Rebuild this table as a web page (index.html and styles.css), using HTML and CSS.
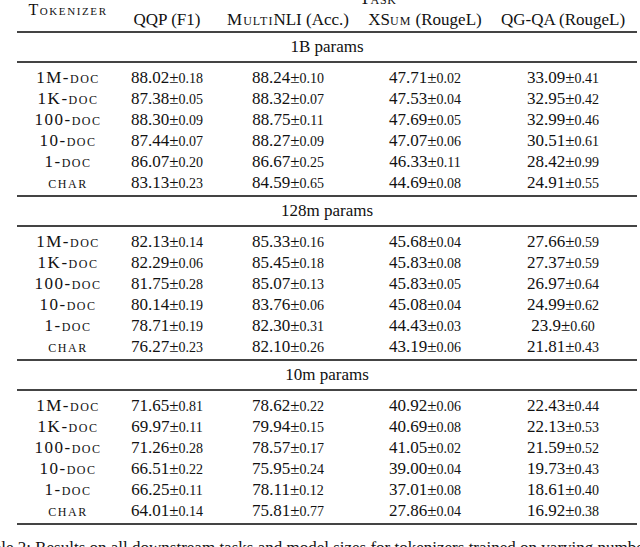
FILE: index.html
```html
<!DOCTYPE html>
<html>
<head>
<meta charset="utf-8">
<link rel="stylesheet" href="styles.css">
</head>
<body>
<table class="results">
  <colgroup>
    <col class="c-tok"><col class="c-qqp"><col class="c-nli"><col class="c-xsum"><col class="c-qg">
  </colgroup>
  <thead>
    <tr>
      <th rowspan="2" class="tok-h">Tokenizer</th>
      <th colspan="4" class="task-h">Task</th>
    </tr>
    <tr>
      <th class="sub">QQP (F1)</th>
      <th class="sub"><span class="sc">Multi</span>NLI (Acc.)</th>
      <th class="sub">XS<span class="sc">um</span> (RougeL)</th>
      <th class="sub">QG-QA (RougeL)</th>
    </tr>
  </thead>
  <tbody>
    <tr class="group"><td colspan="5">1B params</td></tr>
    <tr class="first"><td class="tok">1M-doc</td><td>88.02<span class="pm">±</span><span class="sd">0.18</span></td><td>88.24<span class="pm">±</span><span class="sd">0.10</span></td><td>47.71<span class="pm">±</span><span class="sd">0.02</span></td><td>33.09<span class="pm">±</span><span class="sd">0.41</span></td></tr>
    <tr><td class="tok">1K-doc</td><td>87.38<span class="pm">±</span><span class="sd">0.05</span></td><td>88.32<span class="pm">±</span><span class="sd">0.07</span></td><td>47.53<span class="pm">±</span><span class="sd">0.04</span></td><td>32.95<span class="pm">±</span><span class="sd">0.42</span></td></tr>
    <tr><td class="tok">100-doc</td><td>88.30<span class="pm">±</span><span class="sd">0.09</span></td><td>88.75<span class="pm">±</span><span class="sd">0.11</span></td><td>47.69<span class="pm">±</span><span class="sd">0.05</span></td><td>32.99<span class="pm">±</span><span class="sd">0.46</span></td></tr>
    <tr><td class="tok">10-doc</td><td>87.44<span class="pm">±</span><span class="sd">0.07</span></td><td>88.27<span class="pm">±</span><span class="sd">0.09</span></td><td>47.07<span class="pm">±</span><span class="sd">0.06</span></td><td>30.51<span class="pm">±</span><span class="sd">0.61</span></td></tr>
    <tr><td class="tok">1-doc</td><td>86.07<span class="pm">±</span><span class="sd">0.20</span></td><td>86.67<span class="pm">±</span><span class="sd">0.25</span></td><td>46.33<span class="pm">±</span><span class="sd">0.11</span></td><td>28.42<span class="pm">±</span><span class="sd">0.99</span></td></tr>
    <tr class="last"><td class="tok">char</td><td>83.13<span class="pm">±</span><span class="sd">0.23</span></td><td>84.59<span class="pm">±</span><span class="sd">0.65</span></td><td>44.69<span class="pm">±</span><span class="sd">0.08</span></td><td>24.91<span class="pm">±</span><span class="sd">0.55</span></td></tr>
  </tbody>
  <tbody>
    <tr class="group"><td colspan="5">128m params</td></tr>
    <tr class="first"><td class="tok">1M-doc</td><td>82.13<span class="pm">±</span><span class="sd">0.14</span></td><td>85.33<span class="pm">±</span><span class="sd">0.16</span></td><td>45.68<span class="pm">±</span><span class="sd">0.04</span></td><td>27.66<span class="pm">±</span><span class="sd">0.59</span></td></tr>
    <tr><td class="tok">1K-doc</td><td>82.29<span class="pm">±</span><span class="sd">0.06</span></td><td>85.45<span class="pm">±</span><span class="sd">0.18</span></td><td>45.83<span class="pm">±</span><span class="sd">0.08</span></td><td>27.37<span class="pm">±</span><span class="sd">0.59</span></td></tr>
    <tr><td class="tok">100-doc</td><td>81.75<span class="pm">±</span><span class="sd">0.28</span></td><td>85.07<span class="pm">±</span><span class="sd">0.13</span></td><td>45.83<span class="pm">±</span><span class="sd">0.05</span></td><td>26.97<span class="pm">±</span><span class="sd">0.64</span></td></tr>
    <tr><td class="tok">10-doc</td><td>80.14<span class="pm">±</span><span class="sd">0.19</span></td><td>83.76<span class="pm">±</span><span class="sd">0.06</span></td><td>45.08<span class="pm">±</span><span class="sd">0.04</span></td><td>24.99<span class="pm">±</span><span class="sd">0.62</span></td></tr>
    <tr><td class="tok">1-doc</td><td>78.71<span class="pm">±</span><span class="sd">0.19</span></td><td>82.30<span class="pm">±</span><span class="sd">0.31</span></td><td>44.43<span class="pm">±</span><span class="sd">0.03</span></td><td>23.9<span class="pm">±</span><span class="sd">0.60</span></td></tr>
    <tr class="last"><td class="tok">char</td><td>76.27<span class="pm">±</span><span class="sd">0.23</span></td><td>82.10<span class="pm">±</span><span class="sd">0.26</span></td><td>43.19<span class="pm">±</span><span class="sd">0.06</span></td><td>21.81<span class="pm">±</span><span class="sd">0.43</span></td></tr>
  </tbody>
  <tbody>
    <tr class="group"><td colspan="5">10m params</td></tr>
    <tr class="first"><td class="tok">1M-doc</td><td>71.65<span class="pm">±</span><span class="sd">0.81</span></td><td>78.62<span class="pm">±</span><span class="sd">0.22</span></td><td>40.92<span class="pm">±</span><span class="sd">0.06</span></td><td>22.43<span class="pm">±</span><span class="sd">0.44</span></td></tr>
    <tr><td class="tok">1K-doc</td><td>69.97<span class="pm">±</span><span class="sd">0.11</span></td><td>79.94<span class="pm">±</span><span class="sd">0.15</span></td><td>40.69<span class="pm">±</span><span class="sd">0.08</span></td><td>22.13<span class="pm">±</span><span class="sd">0.53</span></td></tr>
    <tr><td class="tok">100-doc</td><td>71.26<span class="pm">±</span><span class="sd">0.28</span></td><td>78.57<span class="pm">±</span><span class="sd">0.17</span></td><td>41.05<span class="pm">±</span><span class="sd">0.02</span></td><td>21.59<span class="pm">±</span><span class="sd">0.52</span></td></tr>
    <tr><td class="tok">10-doc</td><td>66.51<span class="pm">±</span><span class="sd">0.22</span></td><td>75.95<span class="pm">±</span><span class="sd">0.24</span></td><td>39.00<span class="pm">±</span><span class="sd">0.04</span></td><td>19.73<span class="pm">±</span><span class="sd">0.43</span></td></tr>
    <tr><td class="tok">1-doc</td><td>66.25<span class="pm">±</span><span class="sd">0.11</span></td><td>78.11<span class="pm">±</span><span class="sd">0.12</span></td><td>37.01<span class="pm">±</span><span class="sd">0.08</span></td><td>18.61<span class="pm">±</span><span class="sd">0.40</span></td></tr>
    <tr class="last"><td class="tok">char</td><td>64.01<span class="pm">±</span><span class="sd">0.14</span></td><td>75.81<span class="pm">±</span><span class="sd">0.77</span></td><td>27.86<span class="pm">±</span><span class="sd">0.04</span></td><td>16.92<span class="pm">±</span><span class="sd">0.38</span></td></tr>
  </tbody>
</table>
<p class="caption">Table 2: Results on all downstream tasks and model sizes for tokenizers trained on varying numbers of documents. Results are averaged over seeds.</p>
</body>
</html>
```

FILE: styles.css
```css
html, body {
  margin: 0;
  padding: 0;
  overflow: hidden;
  background: #fff;
}

body {
  font-family: "Liberation Serif", "Times New Roman", serif;
  color: #111;
}

.results {
  border-collapse: separate;
  border-spacing: 0;
  table-layout: fixed;
  width: 620px;
  margin: -12px 0 0 17px;
  font-size: 17px;
  line-height: 21px;
}

.c-tok { width: 102px; }
.c-qqp { width: 96px; }
.c-nli { width: 146px; }
.c-xsum { width: 128px; }
.c-qg { width: 148px; }

.results th,
.results td {
  padding: 0;
  height: 21px;
  text-align: center;
  font-weight: normal;
  white-space: nowrap;
}

.tok-h {
  font-size: 16px;
  font-variant: small-caps;
  letter-spacing: 1.6px;
  vertical-align: middle;
  border-bottom: 2px solid #444;
}

.task-h {
  font-size: 17px;
  font-variant: small-caps;
  letter-spacing: 0.6px;
  padding-bottom: 1px;
}

.results .sub {
  padding-bottom: 1px;
  border-bottom: 2px solid #444;
}

.sc {
  font-variant: small-caps;
  letter-spacing: 1px;
  line-height: 0;
}

.group td {
  padding: 3px 0 4px;
  border-bottom: 2px solid #444;
}

.first td {
  padding-top: 4px;
}

.last td {
  padding-bottom: 2px;
  border-bottom: 2px solid #444;
}

.tok {
  font-variant: small-caps;
  letter-spacing: 1.5px;
}

.pm {
  line-height: 0;
}

.sd {
  font-size: 14px;
  line-height: 0;
}

.caption {
  margin: 12px 0 0 -24px;
  font-size: 17px;
  line-height: 21px;
  white-space: nowrap;
}
```
